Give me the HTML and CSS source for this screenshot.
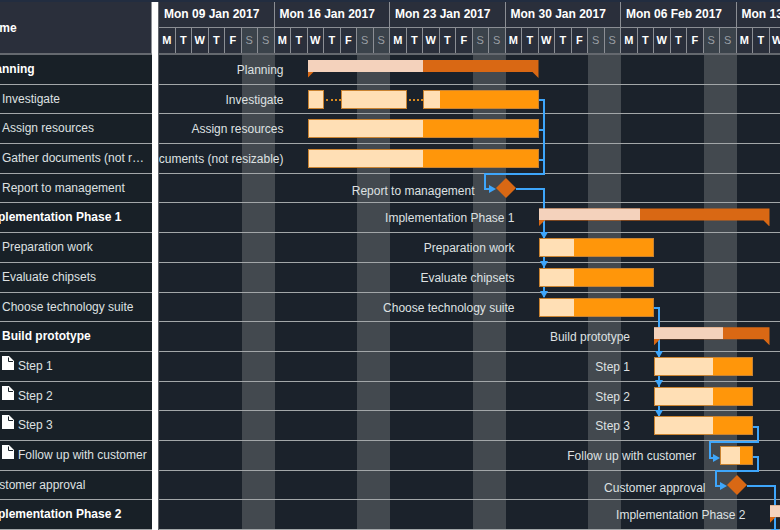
FILE: index.html
```html
<!DOCTYPE html>
<html lang="en">
<head>
    <meta charset="UTF-8">
    <meta name="viewport" content="width=device-width, initial-scale=1.0">
    <title>Project schedule</title>
    <link rel="stylesheet" href="styles.css">
</head>
<body>
    <svg class="symbols" aria-hidden="true">
        <symbol id="file-icon" viewBox="0 0 12 14">
            <path fill="#fff" d="M0 0h7l5 5v9H0z"/>
            <path fill="none" stroke="#182027" d="M6.500 1.500v4h4.500"/>
        </symbol>
    </svg>
    <main class="gantt">
        <section class="grid-panel">
            <table class="task-table">
                <thead>
                    <tr><th class="name-header">Name</th></tr>
                </thead>
                <tbody>
                    <tr><td class="group">Planning</td></tr>
                    <tr><td class="level-1">Investigate</td></tr>
                    <tr><td class="level-1">Assign resources</td></tr>
                    <tr><td class="level-1">Gather documents (not resizable)</td></tr>
                    <tr><td class="level-1">Report to management</td></tr>
                    <tr><td class="group">Implementation Phase 1</td></tr>
                    <tr><td class="level-1">Preparation work</td></tr>
                    <tr><td class="level-1">Evaluate chipsets</td></tr>
                    <tr><td class="level-1">Choose technology suite</td></tr>
                    <tr><td class="level-1 group">Build prototype</td></tr>
                    <tr><td class="level-1"><svg class="file-icon"><use href="#file-icon"/></svg>Step 1</td></tr>
                    <tr><td class="level-1"><svg class="file-icon"><use href="#file-icon"/></svg>Step 2</td></tr>
                    <tr><td class="level-1"><svg class="file-icon"><use href="#file-icon"/></svg>Step 3</td></tr>
                    <tr><td class="level-1"><svg class="file-icon"><use href="#file-icon"/></svg>Follow up with customer</td></tr>
                    <tr><td>Customer approval</td></tr>
                    <tr><td class="group">Implementation Phase 2</td></tr>
                </tbody>
            </table>
        </section>
        <div class="splitter"></div>
        <section class="timeline-panel">
            <div class="timeline">
                <header class="timeline-header">
                    <div class="weeks">
                        <div class="week">Mon 09 Jan 2017</div>
                        <div class="week">Mon 16 Jan 2017</div>
                        <div class="week">Mon 23 Jan 2017</div>
                        <div class="week">Mon 30 Jan 2017</div>
                        <div class="week">Mon 06 Feb 2017</div>
                        <div class="week">Mon 13 Feb 2017</div>
                    </div>
                    <div class="days">
                        <span>M</span><span>T</span><span>W</span><span>T</span><span>F</span><span class="off">S</span><span class="off">S</span>
                        <span>M</span><span>T</span><span>W</span><span>T</span><span>F</span><span class="off">S</span><span class="off">S</span>
                        <span>M</span><span>T</span><span>W</span><span>T</span><span>F</span><span class="off">S</span><span class="off">S</span>
                        <span>M</span><span>T</span><span>W</span><span>T</span><span>F</span><span class="off">S</span><span class="off">S</span>
                        <span>M</span><span>T</span><span>W</span><span>T</span><span>F</span><span class="off">S</span><span class="off">S</span>
                        <span>M</span><span>T</span><span>W</span><span>T</span><span>F</span><span class="off">S</span><span class="off">S</span>
                    </div>
                </header>
                <div class="chart">
                    <div class="weekends">
                        <i style="grid-column: 6 / 8"></i>
                        <i style="grid-column: 13 / 15"></i>
                        <i style="grid-column: 20 / 22"></i>
                        <i style="grid-column: 27 / 29"></i>
                        <i style="grid-column: 34 / 36"></i>
                        <i style="grid-column: 41 / 43"></i>
                    </div>
                    <svg class="links" viewBox="0 0 693 475" preserveAspectRatio="none">
                        <path d="M379 45h6v74h-59v15h6M379 75h6M379 105h6"/>
                        <path d="M357 134h28v108"/>
                        <path d="M495 253h5v108"/>
                        <path d="M594 372h5v15h-48v16h4"/>
                        <path d="M594 402h5v14h-42v15h5"/>
                        <path d="M588 431h28v44"/>
                        <g class="heads">
                            <path d="M330 130l7 4l-7 4z"/>
                            <path d="M381 177h8l-4 7z"/>
                            <path d="M381 206h8l-4 7z"/>
                            <path d="M381 236h8l-4 7z"/>
                            <path d="M496 296h8l-4 7z"/>
                            <path d="M496 325h8l-4 7z"/>
                            <path d="M496 355h8l-4 7z"/>
                            <path d="M554 399l7 4l-7 4z"/>
                            <path d="M561 427l7 4l-7 4z"/>
                            <path d="M612 474h8l-4 7z"/>
                        </g>
                    </svg>
                    <div class="rows">
                        <div class="row">
                            <span class="label" style="grid-column: 1 / 10">Planning</span>
                            <div class="summary" style="grid-column: 10 / 24"><div class="done" style="width: 50%"></div></div>
                        </div>
                        <div class="row">
                            <span class="label" style="grid-column: 1 / 10">Investigate</span>
                            <div class="bar" style="grid-column: 10 / 11"><div class="done" style="width: 100%"></div></div>
                            <div class="gap" style="grid-column: 11 / 12"></div>
                            <div class="bar" style="grid-column: 12 / 16"><div class="done" style="width: 100%"></div></div>
                            <div class="gap" style="grid-column: 16 / 17"></div>
                            <div class="bar" style="grid-column: 17 / 24"><div class="done" style="width: 14%"></div></div>
                        </div>
                        <div class="row">
                            <span class="label" style="grid-column: 1 / 10">Assign resources</span>
                            <div class="bar" style="grid-column: 10 / 24"><div class="done" style="width: 50%"></div></div>
                        </div>
                        <div class="row">
                            <span class="label" style="grid-column: 1 / 10">Gather documents (not resizable)</span>
                            <div class="bar" style="grid-column: 10 / 24"><div class="done" style="width: 50%"></div></div>
                        </div>
                        <div class="row">
                            <span class="label milestone-label" style="grid-column: 1 / 22">Report to management</span>
                            <svg class="milestone" viewBox="0 0 20 20" style="grid-column: 21 / 23"><path d="M10 0l10 10l-10 10l-10-10z"/></svg>
                        </div>
                        <div class="row">
                            <span class="label" style="grid-column: 1 / 24">Implementation Phase 1</span>
                            <div class="summary" style="grid-column: 24 / 38"><div class="done" style="width: 44%"></div></div>
                        </div>
                        <div class="row">
                            <span class="label" style="grid-column: 1 / 24">Preparation work</span>
                            <div class="bar" style="grid-column: 24 / 31"><div class="done" style="width: 30%"></div></div>
                        </div>
                        <div class="row">
                            <span class="label" style="grid-column: 1 / 24">Evaluate chipsets</span>
                            <div class="bar" style="grid-column: 24 / 31"><div class="done" style="width: 30%"></div></div>
                        </div>
                        <div class="row">
                            <span class="label" style="grid-column: 1 / 24">Choose technology suite</span>
                            <div class="bar" style="grid-column: 24 / 31"><div class="done" style="width: 30%"></div></div>
                        </div>
                        <div class="row">
                            <span class="label" style="grid-column: 1 / 31">Build prototype</span>
                            <div class="summary" style="grid-column: 31 / 38"><div class="done" style="width: 60%"></div></div>
                        </div>
                        <div class="row">
                            <span class="label" style="grid-column: 1 / 31">Step 1</span>
                            <div class="bar" style="grid-column: 31 / 37"><div class="done" style="width: 60%"></div></div>
                        </div>
                        <div class="row">
                            <span class="label" style="grid-column: 1 / 31">Step 2</span>
                            <div class="bar" style="grid-column: 31 / 37"><div class="done" style="width: 60%"></div></div>
                        </div>
                        <div class="row">
                            <span class="label" style="grid-column: 1 / 31">Step 3</span>
                            <div class="bar" style="grid-column: 31 / 37"><div class="done" style="width: 60%"></div></div>
                        </div>
                        <div class="row">
                            <span class="label" style="grid-column: 1 / 35">Follow up with customer</span>
                            <div class="bar" style="grid-column: 35 / 37"><div class="done" style="width: 60%"></div></div>
                        </div>
                        <div class="row">
                            <span class="label milestone-label" style="grid-column: 1 / 36">Customer approval</span>
                            <svg class="milestone" viewBox="0 0 20 20" style="grid-column: 35 / 37"><path d="M10 0l10 10l-10 10l-10-10z"/></svg>
                        </div>
                        <div class="row">
                            <span class="label" style="grid-column: 1 / 38">Implementation Phase 2</span>
                            <div class="summary" style="grid-column: 38 / 43"><div class="done" style="width: 60%"></div></div>
                        </div>
                    </div>
                </div>
            </div>
        </section>
    </main>
</body>
</html>
```

FILE: styles.css
```css
* {
    box-sizing: border-box;
}
body {
    margin: 0;
    font-family: "Liberation Sans", Arial, sans-serif;
    font-size: 12px;
    color: #dfe1e2;
    background-color: #1b222b;
}
.symbols {
    display: none;
}
.gantt {
    display: flex;
    height: 100vh;
    border-top: 2px solid #222d40;
    overflow: hidden;
}

/* task list, scrolled a little to the right */
.grid-panel {
    flex: none;
    width: 152px;
    overflow: hidden;
    background-color: #182027;
}
.task-table {
    display: flex;
    flex-direction: column;
    width: 176px;
    height: 100%;
    margin-left: -24px;
}
.task-table thead,
.task-table tr,
.task-table th,
.task-table td {
    display: block;
    padding: 0;
}
.task-table .name-header {
    height: 53px;
    padding-left: 8px;
    line-height: 53px;
    text-align: left;
    color: #fff;
    background-color: #2a2f3b;
    border-right: 1px solid #8b8e94;
    border-bottom: 2px solid #65696f;
}
.task-table tbody {
    flex: 1;
    display: grid;
    grid-template-columns: minmax(0, 1fr);
    grid-template-rows: repeat(16, minmax(0, 1fr));
}
.task-table tbody tr {
    border-bottom: 1px solid #a3a7a9;
}
.task-table td {
    padding: 0 4px 0 8px;
    line-height: 28px;
    overflow: hidden;
    white-space: nowrap;
    text-overflow: ellipsis;
}
.task-table .level-1 {
    padding-left: 26px;
}
.task-table .group {
    font-weight: bold;
    color: #fff;
}
.file-icon {
    width: 12px;
    height: 14px;
    margin-right: 4px;
}

.splitter {
    flex: none;
    width: 7px;
    background-color: #fff;
    border-right: 1px solid #65696f;
}

/* timeline */
.timeline-panel {
    flex: 1;
    min-width: 0;
    overflow: hidden;
}
.timeline {
    display: flex;
    flex-direction: column;
    width: 693px;
    height: 100%;
}
.timeline-header {
    font-weight: bold;
    color: #fff;
    background-color: #2a2f3b;
    border-bottom: 2px solid #65696f;
}
.weeks {
    display: grid;
    grid-template-columns: repeat(6, 1fr);
    border-bottom: 1px solid #8b8e94;
}
.week {
    padding-left: 5px;
    line-height: 25px;
    border-right: 1px solid #8b8e94;
    white-space: nowrap;
}
.days,
.weekends,
.row {
    display: grid;
    grid-template-columns: repeat(42, minmax(0, 1fr));
}
.days span {
    line-height: 25px;
    font-size: 11px;
    text-align: center;
    border-right: 1px solid #8b8e94;
}
.days .off {
    font-weight: normal;
    color: #9a9fa4;
    background-color: #3b434b;
}
.chart {
    flex: 1;
    display: grid;
    grid-template-rows: minmax(0, 1fr);
    min-height: 0;
}
.weekends,
.links,
.rows {
    grid-area: 1 / 1;
}
.weekends i {
    background-color: #43494f;
}
.links {
    z-index: 1;
    width: 100%;
    height: 100%;
    fill: none;
    stroke: #3ea6fb;
    stroke-width: 2;
}
.links .heads {
    fill: #3ea6fb;
    stroke: none;
}
.rows {
    display: grid;
    grid-template-rows: repeat(16, minmax(0, 1fr));
}
.row {
    grid-template-rows: minmax(0, 1fr);
    border-bottom: 1px solid #a3a7a9;
}
.row > * {
    grid-row: 1;
    z-index: 2;
}
.label {
    display: flex;
    justify-content: flex-end;
    padding-right: 24px;
    line-height: 30px;
    white-space: nowrap;
}
.milestone-label {
    padding-right: 31px;
    line-height: 34px;
}
.bar {
    height: 19px;
    margin-top: 5px;
    background-color: #ff960a;
    border: 1px solid #c98331;
}
.bar .done {
    height: 100%;
    background-color: #ffdfb5;
}
.gap {
    height: 2px;
    margin: 14px 0 0 2px;
    border-top: 2px dotted #d98a1f;
}
.summary {
    height: 18px;
    margin-top: 5px;
    background-color: #d96814;
    clip-path: polygon(0 0, 100% 0, 100% 100%, calc(100% - 6px) 12px, 6px 12px, 0 100%);
}
.summary .done {
    height: 12px;
    background-color: #f4d2bc;
}
.milestone {
    align-self: center;
    justify-self: center;
    width: 20px;
    height: 20px;
    fill: #d96814;
}
```
